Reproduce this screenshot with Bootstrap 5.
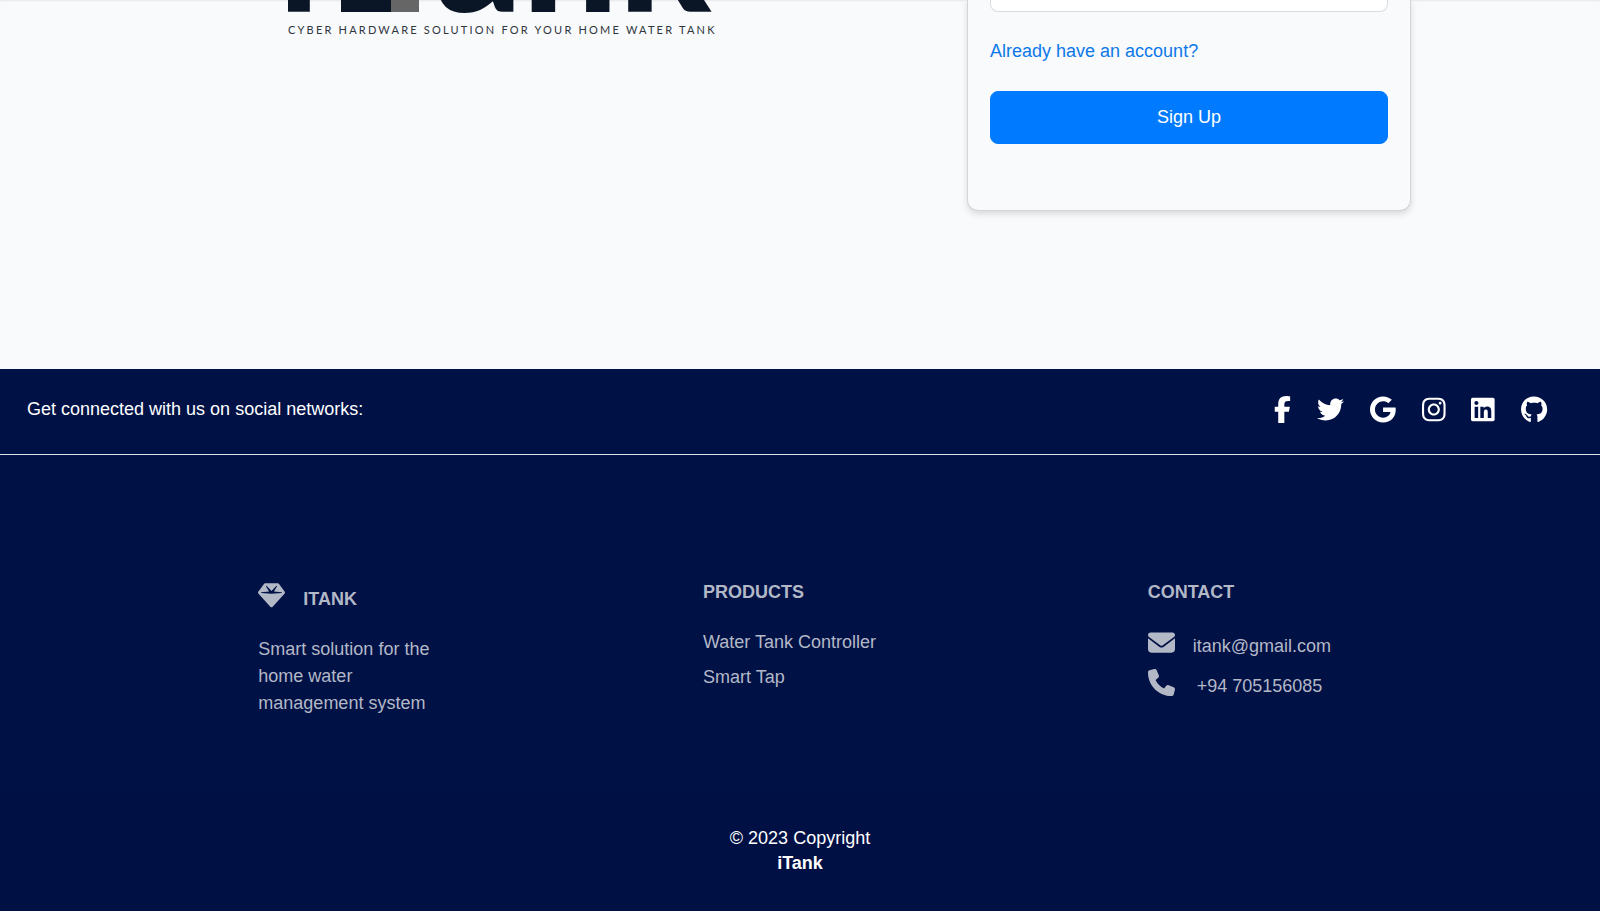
<!DOCTYPE html>
<html lang="en">
<head>
<meta charset="utf-8">
<meta name="viewport" content="width=device-width, initial-scale=1">
<title>iTank – Sign Up</title>
<link rel="stylesheet" href="https://cdn.jsdelivr.net/npm/bootstrap@5.3.0/dist/css/bootstrap.min.css">
<style>
  body { font-family: "Liberation Sans", Arial, sans-serif; font-size: 18px; line-height: 27px; background: #f8f9fa; }
  .page-width { max-width: 1334px; }
  .hero { background: #f8fafc; padding-bottom: 158px; box-shadow: inset 0 2px 2px -1px rgba(0,0,0,.08); }
  .hero-inner { padding: 0 56px 0 155px; }
  .signup { width: 444px; padding: 0 22px 66px; border: 1px solid #d3d6d9; border-top: 0; border-radius: 0 0 11px 11px; background: #f8fafc; box-shadow: 0 3px 6px rgba(0,0,0,.13); }
  .signup .form-control { height: 12px; min-height: 0; padding: 0 12px; border: 1px solid #d8dde2; border-top: 0; border-radius: 0 0 8px 8px; }
  .signup a { color: #0d78e8; margin: 26px 0; }
  .btn-signup { --bs-btn-color: #fff; --bs-btn-bg: #007bff; --bs-btn-hover-color: #fff; --bs-btn-hover-bg: #0069d9; --bs-btn-border-color: #007bff; font-size: 18px; line-height: 27px; padding: 12px; border-radius: 8px; }
  .tagline { font-size: 11px; letter-spacing: .2em; }
  .site-footer { background: #001146; color: #fff; }
  .social-bar { padding: 27px 53px 31px 27px; border-bottom: 1px solid #dee2e6; }
  .social-bar nav { gap: 26px; }
  .social-bar svg, .ico { height: 27px; fill: currentColor; display: block; overflow: visible; }
  .footer-columns { padding: 124px 0 76px; color: #b3b8c7; }
  .footer-block { width: 194px; }
  .footer-block a { color: inherit; }
  .footer-block h2 { font-size: 18px; line-height: 27px; font-weight: 700; margin-bottom: 23px; }
  .footer-block .brand-title { gap: 18px; height: 34px; }
  .contact-row { gap: 18px; height: 40px; }
  .copyright { background: rgba(0,0,0,.025); padding: 33px 0 35px; line-height: 25px; }
</style>
</head>
<body>
<main>
  <section class="hero">
    <div class="d-flex justify-content-between align-items-start page-width mx-auto hero-inner">
      <svg width="432" height="40" viewBox="0 0 432 40" role="img" aria-label="iTank">
        <g font-family="Lato, sans-serif" font-weight="900" font-size="170" fill="#0a1626">
          <text x="-12" y="12">i</text>
          <text x="147" y="12">ank</text>
        </g>
        <rect x="53" y="0" width="50" height="12" fill="#0a1626"/>
        <rect x="103" y="0" width="28" height="12" fill="#666"/>
        <text class="tagline" x="0" y="34" font-family="Lato, sans-serif" fill="#30363d">CYBER HARDWARE SOLUTION FOR YOUR HOME WATER TANK</text>
      </svg>
      <form class="signup">
        <input class="form-control" type="password" aria-label="Confirm password">
        <a class="d-block text-decoration-none" href="#">Already have an account?</a>
        <button class="btn btn-signup w-100" type="submit">Sign Up</button>
      </form>
    </div>
  </section>
</main>
<footer class="site-footer">
  <div class="social-bar d-flex justify-content-between align-items-center">
    <span>Get connected with us on social networks:</span>
    <nav class="d-flex align-items-center" aria-label="Social networks">
      <a class="text-white" href="#" aria-label="Facebook"><svg viewBox="0 0 320 512"><path d="M80 299.3V512H196V299.3h86.5l18-97.8H196V166.900c0-51.700 20.300-71.500 72.700-71.500 16.300 0 29.400.4 37 1.200V7.900C291.400 4 256.400 0 236.200 0 129.300 0 80 50.500 80 159.400v42.100H14v97.800H80z"/></svg></a>
      <a class="text-white" href="#" aria-label="Twitter"><svg viewBox="0 0 512 512"><path d="M459.37 151.716c.325 4.548.325 9.097.325 13.645 0 138.72-105.583 298.558-298.558 298.558-59.452 0-114.68-17.219-161.137-47.106 8.447.974 16.568 1.299 25.34 1.299 49.055 0 94.213-16.568 130.274-44.832-46.132-.975-84.792-31.188-98.112-72.772 6.498.974 12.995 1.624 19.818 1.624 9.421 0 18.843-1.3 27.614-3.573-48.081-9.747-84.143-51.98-84.143-102.985v-1.299c13.969 7.797 30.214 12.67 47.431 13.319-28.264-18.843-46.781-51.005-46.781-87.391 0-19.492 5.197-37.36 14.294-52.954 51.655 63.675 129.3 105.258 216.365 109.807-1.624-7.797-2.599-15.918-2.599-24.04 0-57.828 46.782-104.934 104.934-104.934 30.213 0 57.502 12.67 76.67 33.137 23.715-4.548 46.456-13.32 66.599-25.34-7.798 24.366-24.366 44.833-46.132 57.827 21.117-2.273 41.584-8.122 60.426-16.243-14.292 20.791-32.161 39.308-52.628 54.253z"/></svg></a>
      <a class="text-white" href="#" aria-label="Google"><svg viewBox="0 0 488 512"><path d="M488 261.8C488 403.3 391.1 504 248 504 110.8 504 0 393.2 0 256S110.8 8 248 8c66.8 0 123 24.5 166.3 64.9l-67.5 64.9C258.5 52.6 94.3 116.6 94.3 256c0 86.5 69.1 156.6 153.7 156.6 98.2 0 135-70.4 140.8-106.9H248v-85.3h236.1c2.3 12.7 3.9 24.9 3.9 41.4z"/></svg></a>
      <a class="text-white" href="#" aria-label="Instagram"><svg viewBox="0 0 448 512"><path d="M224.1 141c-63.6 0-114.9 51.3-114.9 114.9s51.3 114.9 114.9 114.9S339 319.5 339 255.900 287.700 141 224.100 141zm0 189.600c-41.100 0-74.700-33.500-74.700-74.700s33.500-74.700 74.700-74.700 74.700 33.500 74.700 74.700-33.600 74.700-74.700 74.700zm146.400-194.300c0 14.900-12 26.800-26.800 26.800-14.900 0-26.800-12-26.800-26.800s12-26.800 26.800-26.800 26.800 12 26.800 26.800zm76.100 27.200c-1.700-35.900-9.900-67.700-36.200-93.900-26.200-26.200-58-34.400-93.900-36.200-37-2.100-147.900-2.100-184.900 0-35.800 1.700-67.600 9.900-93.900 36.100s-34.400 58-36.200 93.900c-2.100 37-2.100 147.900 0 184.900 1.700 35.900 9.900 67.700 36.200 93.900s58 34.400 93.900 36.200c37 2.100 147.900 2.100 184.900 0 35.900-1.700 67.700-9.900 93.900-36.200 26.200-26.200 34.400-58 36.200-93.900 2.100-37 2.100-147.800 0-184.800zM398.800 388c-7.800 19.600-22.900 34.700-42.600 42.600-29.500 11.700-99.500 9-132.100 9s-102.700 2.600-132.100-9c-19.600-7.800-34.700-22.900-42.600-42.600-11.700-29.500-9-99.500-9-132.100s-2.600-102.700 9-132.100c7.800-19.600 22.900-34.700 42.600-42.600 29.500-11.700 99.500-9 132.100-9s102.700-2.600 132.100 9c19.600 7.800 34.700 22.900 42.600 42.600 11.700 29.500 9 99.500 9 132.100s2.700 102.700-9 132.100z"/></svg></a>
      <a class="text-white" href="#" aria-label="LinkedIn"><svg viewBox="0 0 448 512"><path d="M416 32H31.900C14.300 32 0 46.500 0 64.300v383.400C0 465.500 14.300 480 31.900 480H416c17.600 0 32-14.500 32-32.300V64.300c0-17.800-14.400-32.300-32-32.300zM135.400 416H69V202.200h66.500V416zm-33.200-243c-21.300 0-38.500-17.300-38.500-38.500S80.900 96 102.200 96c21.200 0 38.500 17.300 38.500 38.500 0 21.300-17.200 38.500-38.500 38.500zm282.100 243h-66.400V312c0-24.800-.5-56.700-34.500-56.700-34.600 0-39.900 27-39.900 54.900V416h-66.400V202.200h63.700v29.200h.9c8.900-16.800 30.600-34.500 62.900-34.500 67.200 0 79.700 44.300 79.700 101.900V416z"/></svg></a>
      <a class="text-white" href="#" aria-label="GitHub"><svg viewBox="0 0 496 512"><path d="M165.900 397.400c0 2-2.300 3.600-5.200 3.600-3.300.3-5.600-1.300-5.600-3.600 0-2 2.300-3.600 5.200-3.600 3-.3 5.600 1.300 5.600 3.600zm-31.100-4.500c-.7 2 1.300 4.300 4.300 4.900 2.600 1 5.600 0 6.200-2s-1.300-4.300-4.300-5.200c-2.600-.7-5.500.3-6.200 2.300zm44.200-1.700c-2.900.7-4.900 2.600-4.600 4.900.3 2 2.900 3.300 5.900 2.600 2.900-.7 4.900-2.600 4.600-4.600-.3-1.900-3-3.200-5.900-2.900zM244.800 8C106.100 8 0 113.300 0 252c0 110.900 69.800 205.800 169.500 239.200 12.800 2.300 17.300-5.600 17.300-12.100 0-6.200-.3-40.400-.3-61.400 0 0-70 15-84.700-29.800 0 0-11.400-29.100-27.800-36.600 0 0-22.900-15.700 1.600-15.400 0 0 24.900 2 38.600 25.800 21.900 38.600 58.600 27.500 72.900 20.900 2.300-16 8.800-27.100 16-33.700-55.900-6.200-112.300-14.300-112.300-110.500 0-27.500 7.600-41.300 23.600-58.900-2.600-6.500-11.100-33.300 2.600-67.900 20.900-6.500 69 27 69 27 20-5.600 41.500-8.500 62.800-8.500s42.800 2.900 62.800 8.500c0 0 48.100-33.600 69-27 13.700 34.700 5.200 61.400 2.600 67.900 16 17.700 25.800 31.500 25.800 58.900 0 96.500-58.900 104.200-114.800 110.500 9.200 7.900 17 22.900 17 46.400 0 33.700-.3 75.400-.3 83.600 0 6.500 4.600 14.400 17.300 12.100C428.200 457.800 496 362.900 496 252 496 113.300 383.500 8 244.800 8zM97.200 352.900c-1.300 1-1 3.300.7 5.200 1.600 1.600 3.900 2.300 5.200 1 1.300-1 1-3.300-.7-5.200-1.600-1.600-3.900-2.300-5.200-1z"/></svg></a>
    </nav>
  </div>
  <div class="footer-columns">
    <div class="row g-0 page-width mx-auto">
      <section class="col-md-4"><div class="footer-block mx-auto">
        <h2 class="brand-title d-flex align-items-end"><svg class="ico mb-1" width="27" viewBox="0 0 512 512"><path d="M116.700 33.800c4.500-6.100 11.700-9.800 19.300-9.800h240c7.600 0 14.800 3.600 19.300 9.800l112 152c6.800 9.200 6.100 21.900-1.500 30.500l-232 256c-4.500 5-11 7.900-17.800 7.900s-13.200-2.900-17.800-7.900l-232-256c-7.700-8.500-8.300-21.200-1.500-30.500l112-152zm38.500 39.800c-3.300 2.500-4.200 7-2.100 10.500l57.400 95.600L63.300 192c-4.100.3-7.300 3.800-7.300 8s3.200 7.600 7.300 8l192 16c.4 0 .9 0 1.300 0l192-16c4.100-.3 7.300-3.800 7.300-8s-3.200-7.600-7.300-8l-147.200-12.300 57.400-95.600c2.100-3.500 1.200-8.100-2.100-10.500s-7.900-2-10.700 1L256 172.200 165.900 74.600c-2.800-3-7.400-3.400-10.700-1z"/></svg><span>ITANK</span></h2>
        <p class="mb-0">Smart solution for the home water management system</p>
      </div></section>
      <section class="col-md-4"><div class="footer-block mx-auto">
        <h2>PRODUCTS</h2>
        <ul class="list-unstyled d-grid gap-2 mb-0">
          <li><a class="text-decoration-none" href="#">Water Tank Controller</a></li>
          <li><a class="text-decoration-none" href="#">Smart Tap</a></li>
        </ul>
      </div></section>
      <section class="col-md-4"><div class="footer-block mx-auto">
        <h2>CONTACT</h2>
        <div class="contact-row d-flex align-items-start"><svg class="ico" width="27" viewBox="0 0 512 512"><path d="M48 64C21.500 64 0 85.500 0 112c0 15.100 7.100 29.300 19.200 38.400L236.800 313.600c11.400 8.500 27 8.500 38.400 0L492.800 150.400c12.100-9.100 19.200-23.300 19.200-38.400 0-26.500-21.500-48-48-48H48zM0 176v208c0 35.300 28.700 64 64 64h384c35.300 0 64-28.700 64-64V176L294.400 339.200c-22.800 17.100-54 17.100-76.800 0L0 176z"/></svg><a class="text-decoration-none pt-1" href="mailto:itank@gmail.com">itank@gmail.com</a></div>
        <div class="contact-row d-flex align-items-start"><svg class="ico" width="27" viewBox="0 0 512 512"><path d="M164.900 24.600c-7.700-18.600-28-28.500-47.400-23.200l-88 24C12.100 30.200 0 46 0 64c0 247.400 200.600 448 448 448 18 0 33.800-12.100 38.600-29.500l24-88c5.300-19.400-4.600-39.700-23.200-47.400l-96-40c-16.300-6.800-35.200-2.100-46.300 11.600L304.700 368C234.300 334.700 177.300 277.700 144 207.300l49.300-40.300c13.700-11.200 18.400-30 11.600-46.300l-40-96z"/></svg><a class="text-decoration-none pt-1 ms-1" href="tel:+94705156085">+94 705156085</a></div>
      </div></section>
    </div>
  </div>
  <div class="copyright text-center">
    <div>© 2023 Copyright</div>
    <a class="text-white text-decoration-none fw-bold" href="#">iTank</a>
  </div>
</footer>
<script src="https://cdn.jsdelivr.net/npm/bootstrap@5.3.0/dist/js/bootstrap.bundle.min.js"></script>
</body>
</html>
